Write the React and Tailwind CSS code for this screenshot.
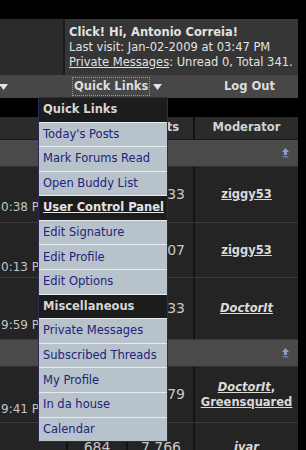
import React from 'react';

const menu = [
    { label: 'Quick Links', head: true },
    { label: "Today's Posts" },
    { label: 'Mark Forums Read' },
    { label: 'Open Buddy List' },
    { label: 'User Control Panel', head: true, link: true },
    { label: 'Edit Signature' },
    { label: 'Edit Profile' },
    { label: 'Edit Options' },
    { label: 'Miscellaneous', head: true },
    { label: 'Private Messages' },
    { label: 'Subscribed Threads' },
    { label: 'My Profile' },
    { label: 'In da house' },
    { label: 'Calendar' },
];

const forums = [
    { h: 'h-[56px]', timePad: 'pt-[33px]', time: '0:38 PM', threads: '233', posts: '4,233', mods: [{ name: 'ziggy53' }] },
    { h: 'h-[55px]', timePad: 'pt-[37px]', time: '0:13 PM', threads: '160', posts: '1,507', mods: [{ name: 'ziggy53' }] },
    { h: 'h-[62px]', timePad: 'pt-[40px]', time: '9:59 PM', threads: '301', posts: '2,133', mods: [{ name: 'DoctorIt', italic: true }] },
];

const forums2 = [
    { h: 'h-[56px]', timePad: 'pt-[35px]', time: '9:41 PM', threads: '245', posts: '3,079', mods: [{ name: 'DoctorIt', italic: true, comma: true }, { name: 'Greensquared' }] },
];

function Arrow({ className }) {
    return (
        <svg width="9" height="6" viewBox="0 0 9 6" className={className}>
            <polygon points="0,0 9,0 4.5,6" fill="#dfe6f2" />
        </svg>
    );
}

function CollapseIcon() {
    return (
        <svg width="7" height="10" viewBox="0 0 7 10">
            <polygon points="3.5,0 7,4 0,4" fill="#8e9cc8" />
            <rect x="2" y="4" width="3" height="3" fill="#8e9cc8" />
            <rect x="0.5" y="8" width="6" height="1.5" fill="#6f7aa6" />
        </svg>
    );
}

function Mods({ mods }) {
    return (
        <div className="text-center leading-[15px]">
            {mods.map((m, i) => (
                <div key={i}>
                    <span className={`underline font-bold ${m.italic ? 'italic' : ''}`}>{m.name}</span>
                    {m.comma && <span className="font-bold">,</span>}
                </div>
            ))}
        </div>
    );
}

function ForumRow({ f }) {
    return (
        <div className={`flex ${f.h} border-b border-[#3a3a3a] bg-[#242424]`}>
            <div className={`w-[68px] border-r-2 border-[#121212] ${f.timePad} pl-[1px] text-[12px] leading-[15px] text-[#c4c4c4]`}>{f.time}</div>
            <div className="w-[60px] border-r-2 border-[#121212] flex items-center justify-center text-[14px] text-[#c8c8c8]">{f.threads}</div>
            <div className="w-[67px] border-r-2 border-[#121212] flex items-center justify-end pr-[8px] text-[14px] text-[#c8c8c8]">{f.posts}</div>
            <div className="flex-1 flex items-center justify-center text-[11.5px] text-[#dadada]">
                <Mods mods={f.mods} />
            </div>
        </div>
    );
}

function CategoryRow() {
    return (
        <div className="h-[27px] bg-[#4a4a4a] border-b border-[#2e2e2e] flex items-center justify-end pr-[9px]">
            <CollapseIcon />
        </div>
    );
}

export default function App() {
    return (
        <div className="relative w-[306px] h-[450px] overflow-hidden bg-black font-['DejaVu_Sans',sans-serif]">
            <div className="h-[19px]" />

            {/* welcome panel */}
            <div className="flex w-[298px] h-[56px]">
                <div className="w-[65px] bg-[#2b2b2b] border-r-2 border-[#1c1c1c]" />
                <div className="flex-1 bg-[#363636] pl-[4px] pt-[6px] text-[11.5px] leading-[15px] text-[#e2e2e2] whitespace-nowrap">
                    <div className="font-bold">Click! Hi, Antonio Correia!</div>
                    <div>Last visit: Jan-02-2009 at 03:47 PM</div>
                    <div><span className="underline">Private Messages</span>: Unread 0, Total 341.</div>
                </div>
            </div>

            {/* nav bar */}
            <div className="flex items-center w-[298px] h-[23px] bg-[#474747] text-[11.5px] font-bold text-[#dcdcdc] whitespace-nowrap">
                <div className="w-[73px] flex items-center">
                    <Arrow className="-ml-[1px]" />
                </div>
                <div className="w-[150px] flex items-center">
                    <span className="outline outline-1 outline-dotted outline-[#9a9a9a] px-[1px] leading-[17px]">Quick Links</span>
                    <Arrow className="ml-[4px]" />
                </div>
                <div className="pl-[1px]">Log Out</div>
            </div>

            <div className="h-[19px]" />

            {/* forum table */}
            <div className="w-[298px]">
                <div className="flex h-[23px] bg-[#2b2b2b] border-b border-[#1a1a1a] text-[11.5px] font-bold text-[#d2d2d2] whitespace-nowrap">
                    <div className="w-[68px] border-r-2 border-[#121212] flex items-center pl-[42px] overflow-hidden">Last Post</div>
                    <div className="w-[60px] border-r-2 border-[#121212] flex items-center justify-center">Threads</div>
                    <div className="w-[67px] border-r-2 border-[#121212] flex items-center justify-end pr-[14px]">Posts</div>
                    <div className="flex-1 flex items-center justify-center">Moderator</div>
                </div>
                <CategoryRow />
                {forums.map((f, i) => <ForumRow key={i} f={f} />)}
                <CategoryRow />
                {forums2.map((f, i) => <ForumRow key={i} f={f} />)}
                <div className="flex h-[56px] bg-[#242424]">
                    <div className="w-[68px] border-r-2 border-[#121212]" />
                    <div className="w-[60px] border-r-2 border-[#121212] pt-[14px] text-center text-[14px] text-[#c8c8c8]">684</div>
                    <div className="w-[67px] border-r-2 border-[#121212] pt-[14px] text-right pr-[12px] text-[14px] text-[#c8c8c8]">7,766</div>
                    <div className="flex-1 pt-[16px] text-center text-[11.5px] font-bold italic underline text-[#dadada]">ivar</div>
                </div>
            </div>

            {/* quick links dropdown */}
            <div className="absolute left-[38px] top-[97px] w-[130px] h-[345px] border border-[#2a2a5e] bg-[#e6ecef] flex flex-col gap-[1px]">
                {menu.map((m, i) => (
                    <div
                        key={i}
                        className={`flex-1 flex items-center pl-[4px] whitespace-nowrap text-[11.5px] ${m.head ? 'bg-[#1c1c1c] font-bold text-[#d6d6d6]' : 'bg-[#b7c2ca] text-[#22227e]'}`}
                    >
                        <span className={m.link ? 'underline text-[#e4e4e4]' : ''}>{m.label}</span>
                    </div>
                ))}
            </div>
        </div>
    );
}
